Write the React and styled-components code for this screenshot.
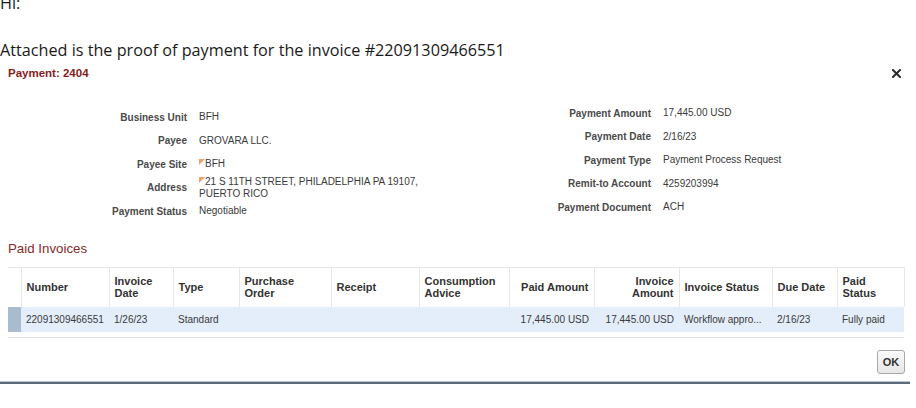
import React from "react"
import styled, { createGlobalStyle } from "styled-components"

const GlobalStyle = createGlobalStyle`
  html, body {
    margin: 0;
    padding: 0;
    background: #ffffff;
  }
  body {
    font-family: "Liberation Sans", Arial, sans-serif;
    color: #333333;
    overflow: hidden;
  }
`

const leftFields = [
  { label: "Business Unit", value: "BFH" },
  { label: "Payee", value: "GROVARA LLC." },
  { label: "Payee Site", value: "BFH", flag: true },
  { label: "Address", value: "21 S 11TH STREET, PHILADELPHIA PA 19107, PUERTO RICO", flag: true, wrap: true },
  { label: "Payment Status", value: "Negotiable" },
]

const rightFields = [
  { label: "Payment Amount", value: "17,445.00 USD" },
  { label: "Payment Date", value: "2/16/23" },
  { label: "Payment Type", value: "Payment Process Request" },
  { label: "Remit-to Account", value: "4259203994" },
  { label: "Payment Document", value: "ACH" },
]

const columns = [
  { key: "sel", width: 13, title: "" },
  { key: "number", width: 88, title: "Number" },
  { key: "date", width: 64, title: ["Invoice", "Date"] },
  { key: "type", width: 66, title: "Type" },
  { key: "po", width: 92, title: ["Purchase", "Order"] },
  { key: "receipt", width: 88, title: "Receipt" },
  { key: "advice", width: 90, title: ["Consumption", "Advice"] },
  { key: "paid", width: 85, title: "Paid Amount", right: true },
  { key: "amount", width: 85, title: ["Invoice", "Amount"], right: true },
  { key: "status", width: 93, title: "Invoice Status" },
  { key: "due", width: 65, title: "Due Date" },
  { key: "paidStatus", width: 67, title: ["Paid", "Status"] },
]

const invoices = [
  {
    number: "22091309466551",
    date: "1/26/23",
    type: "Standard",
    po: "",
    receipt: "",
    advice: "",
    paid: "17,445.00 USD",
    amount: "17,445.00 USD",
    status: "Workflow appro...",
    due: "2/16/23",
    paidStatus: "Fully paid",
  },
]

const App = () => {
  return (
    <>
      <GlobalStyle />
      <Email>
        <EmailLine>Hi:</EmailLine>
        <EmailLine>&nbsp;</EmailLine>
        <EmailLine>Attached is the proof of payment for the invoice #22091309466551</EmailLine>
      </Email>

      <Dialog>
        <TitleBar>
          <Title>Payment: 2404</Title>
          <CloseButton aria-label="Close">
            <svg width="9" height="9" viewBox="0 0 9 9">
              <path d="M1 1 L8 8 M8 1 L1 8" stroke="#2b2b2b" strokeWidth="2" strokeLinecap="square" />
            </svg>
          </CloseButton>
        </TitleBar>

        <Form>
          <FieldGrid $labelWidth={179} $offset={4} $width={458}>
            {leftFields.map((f) => (
              <React.Fragment key={f.label}>
                <Label>{f.label}</Label>
                <Value $wrap={f.wrap}>
                  {f.flag && <Flag />}
                  {f.value}
                </Value>
              </React.Fragment>
            ))}
          </FieldGrid>
          <FieldGrid $labelWidth={185} $offset={0}>
            {rightFields.map((f) => (
              <React.Fragment key={f.label}>
                <Label>{f.label}</Label>
                <Value>{f.value}</Value>
              </React.Fragment>
            ))}
          </FieldGrid>
        </Form>

        <SectionTitle>Paid Invoices</SectionTitle>

        <Table>
          <colgroup>
            {columns.map((c) => (
              <col key={c.key} style={{ width: c.width }} />
            ))}
          </colgroup>
          <thead>
            <tr>
              {columns.map((c) => (
                <HeadCell key={c.key} $right={c.right}>
                  {Array.isArray(c.title) ? (
                    <>
                      {c.title[0]}
                      <br />
                      {c.title[1]}
                    </>
                  ) : (
                    c.title
                  )}
                </HeadCell>
              ))}
            </tr>
          </thead>
          <tbody>
            {invoices.map((row) => (
              <DataRow key={row.number}>
                {columns.map((c) =>
                  c.key === "sel" ? (
                    <SelectorCell key={c.key} />
                  ) : (
                    <DataCell key={c.key} $right={c.right}>
                      {row[c.key]}
                    </DataCell>
                  )
                )}
              </DataRow>
            ))}
          </tbody>
        </Table>
        <TableRule />

        <Footer>
          <OkButton>OK</OkButton>
        </Footer>
      </Dialog>
    </>
  )
}

export default App

const Email = styled.div`
  margin-top: -8px;
  font-family: "Open Sans", Lato, sans-serif;
  font-size: 16.2px;
  color: #1a1a1a;
`

const EmailLine = styled.p`
  margin: 0;
  line-height: 23.5px;
  white-space: nowrap;
`

const Dialog = styled.div`
  width: 910px;
  box-sizing: border-box;
  padding: 0 6px 8px 8px;
  background: #ffffff;
  border-bottom: 2px solid #5f6a79;
  box-shadow: inset 0 -1px 0 #b7c5d8;
`

const TitleBar = styled.div`
  height: 20px;
  display: flex;
  align-items: center;
  justify-content: space-between;
  padding-right: 2px;
`

const Title = styled.h1`
  margin: 0;
  font-size: 11.5px;
  font-weight: bold;
  color: #861c1c;
`

const CloseButton = styled.button`
  width: 12px;
  height: 12px;
  padding: 0;
  border: 0;
  background: none;
  display: flex;
  align-items: center;
  justify-content: center;
  margin-top: 2px;
`

const Form = styled.div`
  display: flex;
  align-items: flex-start;
  margin-top: 19px;
`

const FieldGrid = styled.div`
  display: grid;
  grid-template-columns: ${(p) => p.$labelWidth}px auto;
  grid-auto-rows: 23.5px;
  column-gap: 12px;
  align-items: center;
  margin-top: ${(p) => p.$offset}px;
  width: ${(p) => (p.$width ? `${p.$width}px` : "auto")};
  font-size: 10px;
`

const Label = styled.div`
  justify-self: end;
  font-weight: bold;
  color: #4a4a4a;
  white-space: nowrap;
`

const Value = styled.div`
  color: #3a3a3a;
  line-height: 12px;
  max-width: ${(p) => (p.$wrap ? "232px" : "none")};
  white-space: ${(p) => (p.$wrap ? "normal" : "nowrap")};
`

const Flag = styled.span`
  display: inline-block;
  vertical-align: top;
  width: 0;
  height: 0;
  margin-top: 1px;
  border-top: 6px solid #f0a26c;
  border-right: 6px solid transparent;
`

const SectionTitle = styled.h2`
  margin: 17.5px 0 0 0;
  font-size: 13.3px;
  line-height: 16px;
  font-weight: normal;
  color: #8a2a2a;
`

const Table = styled.table`
  margin-top: 10px;
  width: 896px;
  table-layout: fixed;
  border-collapse: collapse;
  border-top: 1px solid #e6e6e6;
`

const HeadCell = styled.th`
  height: 39px;
  padding: 0 5px;
  font-size: 11px;
  line-height: 12px;
  font-weight: bold;
  color: #333333;
  text-align: ${(p) => (p.$right ? "right" : "left")};
  vertical-align: middle;
  border-right: 1px solid #e6e6e6;
  background: #ffffff;
`

const DataRow = styled.tr`
  height: 25px;
  background: #e4eefa;
`

const SelectorCell = styled.td`
  padding: 0;
  background: #a8bcce;
`

const DataCell = styled.td`
  padding: 0 5px;
  font-size: 10px;
  color: #3a3a3a;
  white-space: nowrap;
  overflow: hidden;
  text-align: ${(p) => (p.$right ? "right" : "left")};
  vertical-align: middle;
`

const TableRule = styled.div`
  width: 896px;
  margin-top: 5px;
  border-top: 1px solid #e3e3e3;
`

const Footer = styled.div`
  display: flex;
  justify-content: flex-end;
  margin-top: 12px;
  width: 897px;
`

const OkButton = styled.button`
  width: 28px;
  height: 24px;
  padding: 0;
  font-family: "Liberation Sans", Arial, sans-serif;
  font-size: 11px;
  font-weight: bold;
  color: #333333;
  border: 1px solid #a8a8a8;
  border-radius: 3px;
  background: linear-gradient(#fbfbfb, #e6e6e6);
`
